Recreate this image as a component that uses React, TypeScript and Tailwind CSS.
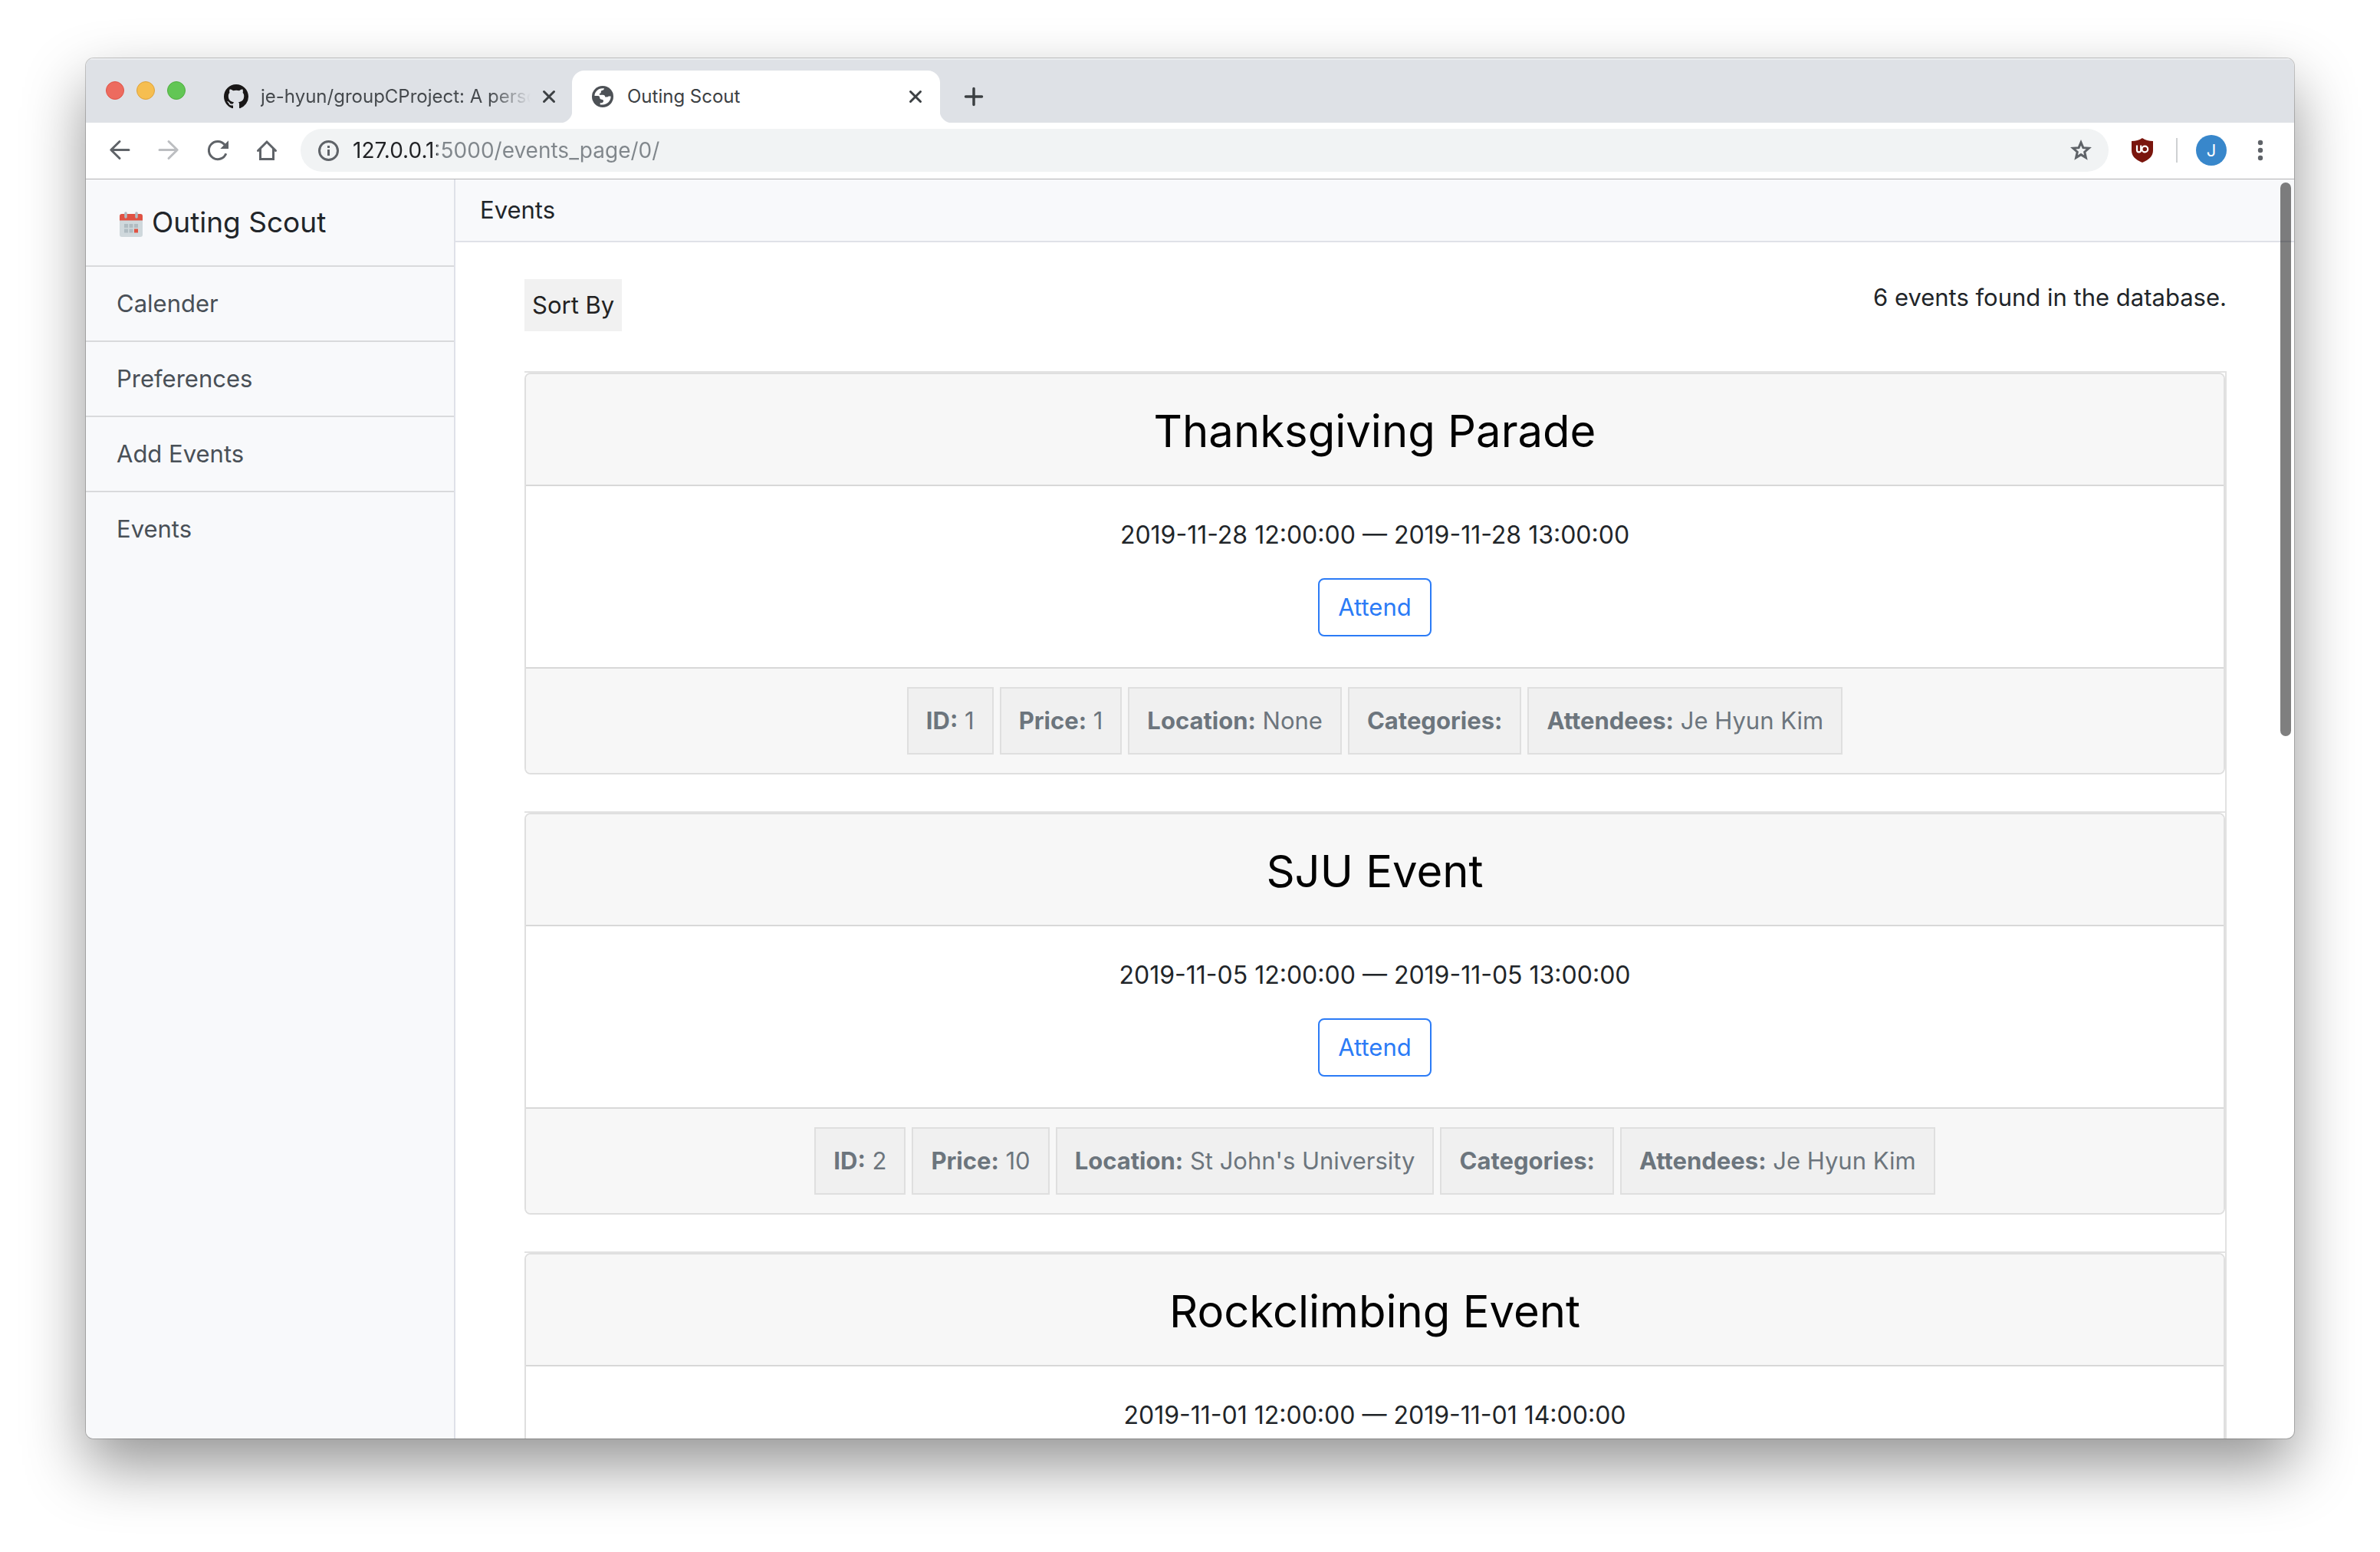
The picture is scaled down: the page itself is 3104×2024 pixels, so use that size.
import type { ReactNode } from "react";

type Tag = { label: string; value?: string };
type EventItem = { title: string; time: string; tags: Tag[] };

const navItems = ["Calender", "Preferences", "Add Events", "Events"];

const events: EventItem[] = [
  {
    title: "Thanksgiving Parade",
    time: "2019-11-28 12:00:00 — 2019-11-28 13:00:00",
    tags: [
      { label: "ID:", value: "1" },
      { label: "Price:", value: "1" },
      { label: "Location:", value: "None" },
      { label: "Categories:" },
      { label: "Attendees:", value: "Je Hyun Kim" },
    ],
  },
  {
    title: "SJU Event",
    time: "2019-11-05 12:00:00 — 2019-11-05 13:00:00",
    tags: [
      { label: "ID:", value: "2" },
      { label: "Price:", value: "10" },
      { label: "Location:", value: "St John's University" },
      { label: "Categories:" },
      { label: "Attendees:", value: "Je Hyun Kim" },
    ],
  },
  {
    title: "Rockclimbing Event",
    time: "2019-11-01 12:00:00 — 2019-11-01 14:00:00",
    tags: [],
  },
];

function Icon({ children, className = "" }: { children: ReactNode; className?: string }) {
  return (
    <svg
      aria-hidden="true"
      viewBox="0 0 32 32"
      fill="none"
      stroke="currentColor"
      strokeWidth="3"
      strokeLinecap="round"
      strokeLinejoin="round"
      className={`size-8 shrink-0 ${className}`}
    >
      {children}
    </svg>
  );
}

function CloseButton({ label }: { label: string }) {
  return (
    <button aria-label={label} className="flex size-8 shrink-0 items-center justify-center text-[#3c4043]">
      <Icon>
        <path d="M9.5 9.5l13 13M22.5 9.5l-13 13" />
      </Icon>
    </button>
  );
}

function TabStrip() {
  return (
    <div className="flex h-[84px] items-end bg-[#dee1e6] shadow-[inset_0_2px_0_rgba(255,255,255,0.4)]">
      <div className="flex items-center gap-4 self-center pl-[26px]">
        <button aria-label="Close window" className="size-6 rounded-full border border-[#df5448] bg-[#ed6b5f]" />
        <button aria-label="Minimize window" className="size-6 rounded-full border border-[#dda23c] bg-[#f6be50]" />
        <button aria-label="Zoom window" className="size-6 rounded-full border border-[#4fae3f] bg-[#62c655]" />
      </div>
      <div className="ml-[50px] flex h-[68px] w-[454px] items-center pr-[14px]">
        <svg aria-hidden="true" viewBox="0 0 16 16" fill="#191717" className="size-8 shrink-0">
          <path d="M8 0C3.58 0 0 3.58 0 8c0 3.54 2.29 6.53 5.47 7.59.4.07.55-.17.55-.38 0-.19-.01-.82-.01-1.49-2.01.37-2.53-.49-2.69-.94-.09-.23-.48-.94-.82-1.13-.28-.15-.68-.52-.01-.53.63-.01 1.08.58 1.23.82.72 1.21 1.87.87 2.33.66.07-.52.28-.87.51-1.07-1.78-.2-3.64-.89-3.64-3.95 0-.87.31-1.59.82-2.15-.08-.2-.36-1.02.08-2.12 0 0 .67-.21 2.2.82.64-.18 1.32-.27 2-.27.68 0 1.36.09 2 .27 1.53-1.04 2.2-.82 2.2-.82.44 1.1.16 1.92.08 2.12.51.56.82 1.27.82 2.15 0 3.07-1.87 3.75-3.65 3.95.29.25.54.73.54 1.48 0 1.07-.01 1.93-.01 2.2 0 .21.15.46.55.38A8.013 8.013 0 0 0 16 8c0-4.42-3.58-8-8-8z" />
        </svg>
        <div className="ml-4 flex-1 overflow-hidden whitespace-nowrap text-2xl text-[#45494d] [mask-image:linear-gradient(to_right,black_85%,transparent)]">
          je-hyun/groupCProject: A perso
        </div>
        <div className="ml-2 flex">
          <CloseButton label="Close je-hyun/groupCProject" />
        </div>
      </div>
      <div className="relative flex h-[68px] w-[480px] items-center rounded-t-2xl bg-white pl-[26px] pr-4 before:absolute before:-left-4 before:bottom-0 before:size-4 before:bg-[radial-gradient(circle_at_0_0,transparent_16px,white_17px)] after:absolute after:-right-4 after:bottom-0 after:size-4 after:bg-[radial-gradient(circle_at_100%_0,transparent_16px,white_17px)]">
        <svg aria-hidden="true" viewBox="0 0 28 28" className="size-7 shrink-0">
          <circle cx="14" cy="14" r="14" fill="#4d5156" />
          <path
            fill="#fff"
            d="M3.4 13C3.6 7.8 8 3.500 13.500 3.300H16c-.2 1.500-1 2.200-2.200 2.400-1.400.2-2.200 1-2 2.300.1 1.300-.6 1.900-1.900 2.100v1.600h4.400c1.900 0 2.900 1 2.900 2.800l2 .1c1 .1 1.900-.2 2.600-1h2.800c.3 5.800-4.600 11-10.600 11h-3.300v-2.300c2.500.2 4.300-.6 4.300-2.500 0-1.200-.9-1.900-2.200-2-1.700-.1-2.600-1.100-2.700-2.800-.1-1.300-.8-2-2.100-2z"
          />
        </svg>
        <span className="ml-[18px] flex-1 text-2xl text-[#3c4043]">Outing Scout</span>
        <CloseButton label="Close Outing Scout" />
      </div>
      <button aria-label="New tab" className="mb-[18px] ml-7 text-[#3c4043]">
        <Icon>
          <path strokeWidth="3.5" d="M16 5.500v21M5.500 16h21" />
        </Icon>
      </button>
    </div>
  );
}

function ToolButton({ label, children, className = "" }: { label: string; children: ReactNode; className?: string }) {
  return (
    <button aria-label={label} className={`flex h-14 w-16 items-center justify-center ${className}`}>
      {children}
    </button>
  );
}

function Toolbar() {
  return (
    <div className="flex h-[74px] items-start border-b border-[#b3b3b5] bg-white pl-3 pr-7 pt-2 text-[#5f6368]">
      <ToolButton label="Back">
        <Icon>
          <path d="M28 15.500H5M16 4.500l-11.200 11L16 26.500" />
        </Icon>
      </ToolButton>
      <ToolButton label="Forward" className="text-[#bcbec1]">
        <Icon>
          <path d="M4 15.500h23M16 4.500l11.200 11L16 26.500" />
        </Icon>
      </ToolButton>
      <ToolButton label="Reload">
        <Icon>
          <path strokeLinecap="butt" d="M26.800 20.200A11.600 11.600 0 1 1 25 8.700" />
          <path fill="currentColor" stroke="none" d="M30 3.300V14H19.300z" />
        </Icon>
      </ToolButton>
      <ToolButton label="Home">
        <Icon>
          <path strokeLinejoin="miter" d="M4.500 16.500L16 5l11.500 11.500" />
          <path strokeLinejoin="miter" strokeLinecap="butt" d="M7.500 14v13.500h17V14" />
        </Icon>
      </ToolButton>
      <div className="ml-3 flex h-14 flex-1 items-center rounded-full bg-[#f1f3f4] px-5">
        <button aria-label="View site information">
          <Icon>
            <circle cx="16.500" cy="16.500" r="12" />
            <path strokeLinecap="butt" d="M16.500 15v8M16.500 10v3" />
          </Icon>
        </button>
        <input
          aria-label="Address"
          defaultValue="127.0.0.1:5000/events_page/0/"
          className="ml-4 h-14 min-w-0 flex-1 bg-[linear-gradient(to_right,#202124_110px,#80868b_110px)] bg-clip-text text-[28px] text-transparent outline-none"
        />
        <button aria-label="Bookmark this page">
          <Icon>
            <path
              strokeLinejoin="miter"
              d="M16 5.800l2.900 6.900 7.400.6-5.600 4.900 1.700 7.300-6.400-3.900-6.400 3.900 1.700-7.300-5.600-4.900 7.400-.6z"
            />
          </Icon>
        </button>
      </div>
      <button aria-label="uBlock Origin" className="ml-7 flex h-14 items-center">
        <svg aria-hidden="true" viewBox="0 0 32 32" className="size-8">
          <path fill="#7a150d" d="M16 0c3.500 2.700 8.500 4 14 4v12c0 8-5 12-14 16C7 28 2 24 2 16V4c5.500 0 10.500-1.300 14-4z" />
          <path fill="none" stroke="#fff" strokeWidth="2.2" d="M9 9.500v6.300a2.600 2.600 0 0 0 5.200 0V9.500" />
          <circle cx="19.300" cy="14.500" r="3.900" fill="none" stroke="#fff" strokeWidth="2.2" />
        </svg>
      </button>
      <div className="ml-7 mt-3 h-8 w-0.5 bg-[#cfd1d3]" />
      <button
        aria-label="Profile J"
        className="ml-6 mt-2 flex size-10 items-center justify-center rounded-full bg-[#3887cb] text-[22px] text-white"
      >
        J
      </button>
      <button aria-label="Menu" className="ml-7 flex h-14 items-center">
        <Icon>
          <g fill="currentColor" stroke="none">
            <circle cx="16" cy="6" r="3.200" />
            <circle cx="16" cy="16" r="3.200" />
            <circle cx="16" cy="26" r="3.200" />
          </g>
        </Icon>
      </button>
    </div>
  );
}

function CalendarIcon() {
  return (
    <svg aria-hidden="true" viewBox="0 0 38 38" className="size-[38px]">
      <rect x="4" y="8" width="30" height="30" rx="3" fill="#cfd8dc" />
      <path fill="#e05243" d="M4 16.500V11a3 3 0 0 1 3-3h24a3 3 0 0 1 3 3v5.500z" />
      <path stroke="#b0bcc2" strokeWidth="3.5" strokeLinecap="round" d="M12 7v5M26 7v5" />
      <path fill="#b0bcc2" d="M10 21h5v5h-5zM16.500 21h5v5h-5zM23 21h5v5h-5zM10 27.500h5v5h-5zM16.500 27.500h5v5h-5z" />
      <path fill="#e05243" d="M23 27.500h5v5h-5z" />
    </svg>
  );
}

function Sidebar() {
  return (
    <aside className="w-[482px] shrink-0 border-r-2 border-[#dfe1e8] bg-[#f8f9fb]">
      <div className="flex h-28 items-center gap-2 pl-10">
        <CalendarIcon />
        <span className="text-[37px] text-[#212529]">Outing Scout</span>
      </div>
      <nav>
        {navItems.map((item) => (
          <a
            key={item}
            href="#"
            className="block border-t-2 border-[#d9dadc] px-10 py-6 text-[31px] leading-[48px] text-[#495057]"
          >
            {item}
          </a>
        ))}
      </nav>
    </aside>
  );
}

function EventCard({ event }: { event: EventItem }) {
  return (
    <article className="overflow-hidden rounded-lg border-2 border-[#dfdfdf] bg-white text-center">
      <h2 className="border-b-2 border-[#d8d8d8] bg-[#f7f7f7] pb-[22px] pt-[26px] text-[58px] leading-24 text-black">
        {event.title}
      </h2>
      <div className="flex flex-col items-center gap-8 py-10">
        <p className="text-[32px] leading-[48px]">{event.time}</p>
        <button className="rounded-lg border-2 border-[#2b7bf6] px-6 py-3 text-[31px] leading-[48px] text-[#2b7bf6]">
          Attend
        </button>
      </div>
      {event.tags.length > 0 && (
        <footer className="flex justify-center gap-2 border-t-2 border-[#d8d8d8] bg-[#f7f7f7] py-6 text-[31px] leading-[48px] text-[#6c757d]">
          {event.tags.map((tag) => (
            <span key={tag.label} className="border-2 border-[#dfdfdf] bg-[#f0f0f0] px-[23px] py-[18px]">
              <b className="font-bold">{tag.label}</b>
              {tag.value && ` ${tag.value}`}
            </span>
          ))}
        </footer>
      )}
    </article>
  );
}

export default function App() {
  return (
    <div className="flex h-screen flex-col bg-white px-28 pb-[148px] pt-[76px] font-['Inter','Liberation_Sans',sans-serif] text-[#212529]">
      <div className="flex min-h-0 flex-1 flex-col overflow-hidden rounded-[10px] bg-white shadow-[0_0_0_1px_rgba(0,0,0,0.2),0_36px_80px_rgba(0,0,0,0.42)]">
        <TabStrip />
        <Toolbar />
        <div className="relative flex min-h-0 flex-1">
          <Sidebar />
          <main className="flex min-w-0 flex-1 flex-col overflow-hidden">
            <header className="shrink-0 border-b-2 border-[#dfe1e8] bg-[#f8f9fb] px-8 py-4">
              <h1 className="text-[31px] leading-[48px]">Events</h1>
            </header>
            <div className="py-12 pl-[90px] pr-[88px]">
              <div className="flex items-start justify-between">
                <button className="bg-[#f1f1f1] p-2.5 text-[31px] leading-[48px] text-[#222222]">Sort By</button>
                <p className="text-[31px] leading-[48px]">6 events found in the database.</p>
              </div>
              <ul className="mt-[52px] border-r-2 border-[#e2e2e2]">
                {events.map((event) => (
                  <li key={event.title} className="border-t-2 border-[#e2e2e2] pb-12">
                    <EventCard event={event} />
                  </li>
                ))}
              </ul>
            </div>
          </main>
          <div className="absolute right-1 top-1 h-[722px] w-3.5 rounded-full bg-black/50" />
        </div>
      </div>
    </div>
  );
}
